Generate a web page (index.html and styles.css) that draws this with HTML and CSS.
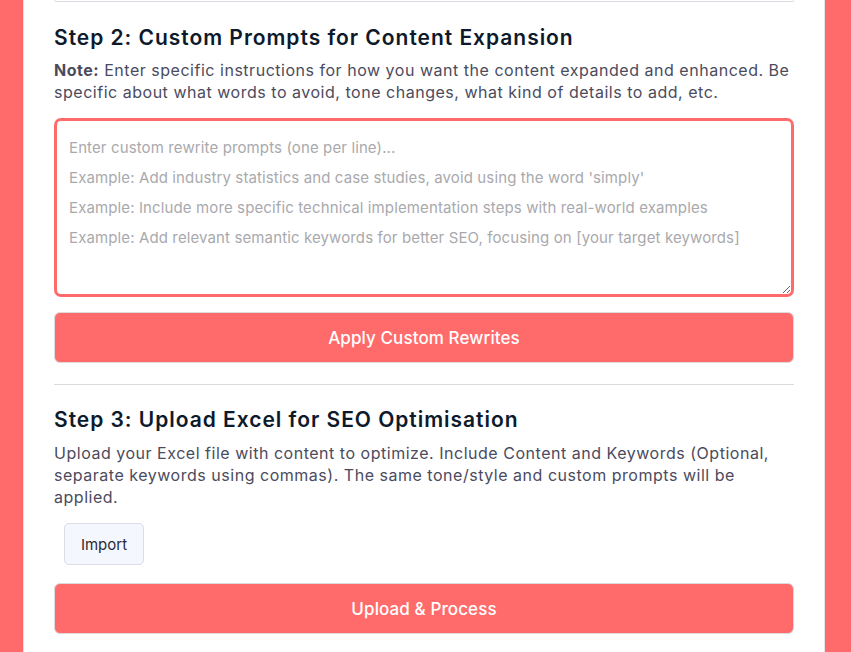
FILE: index.html
```html
<!DOCTYPE html>
<html lang="en">
<head>
<meta charset="utf-8">
<title>SEO Content Tool</title>
<link rel="stylesheet" href="styles.css">
</head>
<body>
<div class="card">
  <div class="prev-box"></div>

  <section class="step step-2">
    <h2 class="step-title">Step 2: Custom Prompts for Content Expansion</h2>
    <p class="step-note"><strong>Note:</strong> Enter specific instructions for how you want the content expanded and enhanced. Be specific about what words to avoid, tone changes, what kind of details to add, etc.</p>
    <textarea class="prompt-input" placeholder="Enter custom rewrite prompts (one per line)...
Example: Add industry statistics and case studies, avoid using the word 'simply'
Example: Include more specific technical implementation steps with real-world examples
Example: Add relevant semantic keywords for better SEO, focusing on [your target keywords]"></textarea>
    <button class="btn-primary" type="button">Apply Custom Rewrites</button>
  </section>

  <hr class="divider">

  <section class="step step-3">
    <h2 class="step-title">Step 3: Upload Excel for SEO Optimisation</h2>
    <p class="step-desc">Upload your Excel file with content to optimize. Include Content and Keywords (Optional, separate keywords using commas). The same tone/style and custom prompts will be applied.</p>
    <div class="import-row">
      <button class="btn-import" type="button">Import</button>
    </div>
    <button class="btn-primary" type="button">Upload &amp; Process</button>
  </section>
</div>
</body>
</html>
```

FILE: styles.css
```css
* { box-sizing: border-box; }

html, body {
  margin: 0;
  padding: 0;
  background: #ff6b6b;
  font-family: Inter, "Noto Sans", sans-serif;
}

body {
  height: 652px;
  overflow: hidden;
}

.card {
  width: 802px;
  margin: 0 0 0 23px;
  background: #ffffff;
  border-left: 1px solid #e3e3e8;
  border-right: 1px solid #e3e3e8;
  padding: 0 30px 40px;
  min-height: 652px;
}

.prev-box {
  height: 2px;
  border: 1px solid #d9dae3;
  border-top: none;
  border-radius: 0 0 3px 3px;
}

.step-title {
  margin: 22px 0 0;
  font-size: 21px;
  line-height: 28px;
  font-weight: 600;
  color: #0d1a2b;
  letter-spacing: 0.97px;
}

.step-note,
.step-desc {
  margin: 7px 0 0;
  font-size: 16px;
  line-height: 22px;
  color: #4b4b5e;
  letter-spacing: 0.52px;
}

.step-note strong {
  font-weight: 700;
  color: #4b4b5e;
}

.prompt-input {
  display: block;
  width: 100%;
  height: 179px;
  margin-top: 15px;
  padding: 12px 12px;
  border: 3px solid #ff6b6b;
  border-radius: 7px;
  font-family: inherit;
  font-size: 15px;
  line-height: 30px;
  color: #333;
  resize: vertical;
  outline: none;
  letter-spacing: 0.12px;
}

.prompt-input::placeholder {
  color: #a9a9ad;
}

.btn-primary {
  display: block;
  width: 100%;
  height: 51px;
  margin-top: 15px;
  background: #ff6b6b;
  color: #ffffff;
  border: 1px solid #dcdcdc;
  border-radius: 6px;
  font-family: inherit;
  font-size: 17px;
  font-weight: 500;
  cursor: pointer;
  letter-spacing: 0.1px;
}

.divider {
  margin: 21px 0 0;
  border: none;
  border-top: 1px solid #dcdcdf;
  height: 0;
}

.step-3 .step-title {
  margin-top: 21px;
}

.step-3 .step-desc {
  margin-top: 8px;
}

.import-row {
  display: flex;
  padding: 15px 10px 0;
}

.btn-import {
  width: 80px;
  height: 42px;
  background: #f4f7fe;
  border: 1px solid #dadce6;
  border-radius: 5px;
  font-family: inherit;
  font-size: 15px;
  color: #2a2a35;
  cursor: pointer;
}

.step-3 .btn-primary {
  margin-top: 18px;
}
```
